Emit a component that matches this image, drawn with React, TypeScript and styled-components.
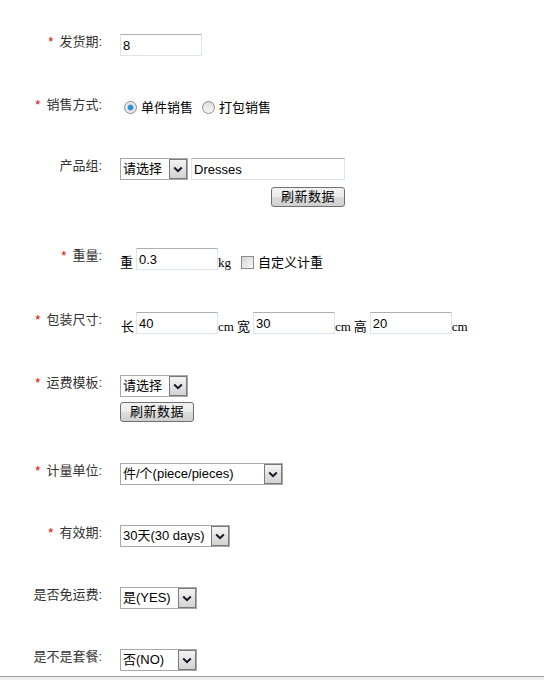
import React from "react";
import styled, { createGlobalStyle } from "styled-components";

const GlobalStyle = createGlobalStyle`
  html, body { margin: 0; padding: 0; background: #fff; }
  body { font-family: "Liberation Sans", "Noto Sans CJK SC", sans-serif; }
`;

const Page = styled.div`
  display: flex;
  flex-direction: column;
  height: 680px;
  overflow: hidden;
`;

const Form = styled.div`
  flex: 1;
  display: flex;
  flex-direction: column;
  padding-top: 34px;
  overflow: hidden;
`;

const Row = styled.div<{ $after: number }>`
  display: flex;
  align-items: flex-start;
  flex-shrink: 0;
  margin-bottom: ${(p) => p.$after}px;
`;

const Label = styled.div`
  width: 102px;
  margin-right: 18px;
  padding-top: 0;
  text-align: right;
  font-size: 13px;
  line-height: 15px;
  color: #333;
  white-space: nowrap;
`;

const Star = styled.span`
  color: #e00000;
  margin-right: 6px;
`;

const Field = styled.div<{ $w?: number }>`
  display: flex;
  flex-direction: column;
  align-items: flex-start;
  ${(p) => (p.$w ? `width: ${p.$w}px;` : "")}
`;

const Line = styled.div<{ $h?: number }>`
  display: flex;
  align-items: flex-end;
  ${(p) => (p.$h ? `height: ${p.$h}px; align-items: center;` : "")}
`;

const TextInput = styled.input<{ $w: number; $ml?: number }>`
  width: ${(p) => p.$w}px;
  height: 22px;
  box-sizing: border-box;
  margin: 0 0 0 ${(p) => p.$ml ?? 0}px;
  padding: 0 2px;
  border: 1px solid #dfe3ea;
  border-top-color: #abadb3;
  border-left-color: #e2e3ea;
  font: 13px "Liberation Sans", "Noto Sans CJK SC", sans-serif;
  color: #000;
  background: #fff;
  outline: none;
`;

const SelectBox = styled.div<{ $w: number }>`
  display: flex;
  width: ${(p) => p.$w}px;
  height: 22px;
  box-sizing: border-box;
  border: 1px solid #a8a8a8;
  background: #fff;
`;

const SelectValue = styled.span`
  flex: 1;
  padding-left: 2px;
  font-size: 13px;
  line-height: 20px;
  color: #000;
  white-space: nowrap;
  overflow: hidden;
`;

const SelectArrow = styled.span`
  width: 18px;
  box-sizing: border-box;
  border: 1px solid #7a7a7a;
  background: linear-gradient(#f4f4f4, #d2d2d2);
  display: flex;
  align-items: center;
  justify-content: center;
`;

const Button = styled.button<{ $mt: number; $self?: string }>`
  width: 74px;
  height: 20px;
  box-sizing: border-box;
  margin: ${(p) => p.$mt}px 0 0 0;
  align-self: ${(p) => p.$self ?? "flex-start"};
  padding: 0;
  border: 1px solid #707070;
  border-radius: 3px;
  background: linear-gradient(#f2f2f2 0%, #ebebeb 50%, #dddddd 50%, #cfcfcf 100%);
  font: 13px "Liberation Sans", "Noto Sans CJK SC", sans-serif;
  line-height: 18px;
  letter-spacing: 0.5px;
  color: #000;
`;

const Text = styled.span<{ $ml?: number; $mr?: number }>`
  font-size: 13px;
  line-height: 15px;
  color: #000;
  margin-left: ${(p) => p.$ml ?? 0}px;
  margin-right: ${(p) => p.$mr ?? 0}px;
  white-space: nowrap;
`;

const Unit = styled.span`
  font-family: "Liberation Serif", serif;
  font-size: 13px;
  line-height: 15px;
  color: #000;
`;

const RadioCircle = styled.span<{ $on?: boolean; $ml: number }>`
  width: 13px;
  height: 13px;
  box-sizing: border-box;
  margin-left: ${(p) => p.$ml}px;
  border-radius: 50%;
  border: 1px solid #8a8a8a;
  background: ${(p) =>
    p.$on
      ? "radial-gradient(circle, #1f8ad6 0, #2f97de 2.5px, #e4e4e4 3.3px, #f6f6f6 100%)"
      : "linear-gradient(#dcdcdc, #f7f7f7)"};
  flex-shrink: 0;
`;

const CheckBox = styled.span<{ $ml: number }>`
  width: 13px;
  height: 13px;
  box-sizing: border-box;
  margin: 0 0 1px ${(p) => p.$ml}px;
  border: 1px solid #8a8a8a;
  background: linear-gradient(135deg, #d4d4d4, #f8f8f8);
  flex-shrink: 0;
`;

const BottomStrip = styled.div`
  flex-shrink: 0;
  height: 4px;
  box-sizing: border-box;
  border-top: 1px solid #a0a0a0;
  background: #f0f0f0;
`;

const Chevron = () => (
  <svg width="10" height="7" viewBox="0 0 10 7">
    <path d="M1.2 1.5 L5 5.2 L8.8 1.5" fill="none" stroke="#111827" strokeWidth="2" />
  </svg>
);

const Select = ({ w, value }: { w: number; value: string }) => (
  <SelectBox $w={w}>
    <SelectValue>{value}</SelectValue>
    <SelectArrow>
      <Chevron />
    </SelectArrow>
  </SelectBox>
);

const FieldLabel = ({ req, children }: { req?: boolean; children: React.ReactNode }) => (
  <Label>
    {req && <Star>*</Star>}
    {children}
  </Label>
);

export default function App() {
  return (
    <Page>
      <GlobalStyle />
      <Form>
        <Row $after={41}>
          <FieldLabel req>发货期:</FieldLabel>
          <TextInput $w={82} defaultValue="8" />
        </Row>

        <Row $after={41}>
          <FieldLabel req>销售方式:</FieldLabel>
          <Line $h={20}>
            <RadioCircle $on $ml={4} />
            <Text $ml={4}>单件销售</Text>
            <RadioCircle $ml={9} />
            <Text $ml={4}>打包销售</Text>
          </Line>
        </Row>

        <Row $after={41}>
          <FieldLabel>产品组:</FieldLabel>
          <Field $w={225}>
            <Line>
              <Select w={68} value="请选择" />
              <TextInput $w={154} $ml={3} defaultValue="Dresses" />
            </Line>
            <Button $mt={7} $self="flex-end">刷新数据</Button>
          </Field>
        </Row>

        <Row $after={42}>
          <FieldLabel req>重量:</FieldLabel>
          <Line>
            <Text $mr={3}>重</Text>
            <TextInput $w={82} defaultValue="0.3" />
            <Unit>kg</Unit>
            <CheckBox $ml={10} />
            <Text $ml={4}>自定义计重</Text>
          </Line>
        </Row>

        <Row $after={41}>
          <FieldLabel req>包装尺寸:</FieldLabel>
          <Line>
            <Text $ml={1} $mr={2}>长</Text>
            <TextInput $w={82} defaultValue="40" />
            <Unit>cm</Unit>
            <Text $ml={3} $mr={3}>宽</Text>
            <TextInput $w={82} defaultValue="30" />
            <Unit>cm</Unit>
            <Text $ml={3} $mr={3}>高</Text>
            <TextInput $w={82} defaultValue="20" />
            <Unit>cm</Unit>
          </Line>
        </Row>

        <Row $after={41}>
          <FieldLabel req>运费模板:</FieldLabel>
          <Field>
            <Select w={68} value="请选择" />
            <Button $mt={5}>刷新数据</Button>
          </Field>
        </Row>

        <Row $after={40}>
          <FieldLabel req>计量单位:</FieldLabel>
          <Select w={163} value="件/个(piece/pieces)" />
        </Row>

        <Row $after={40}>
          <FieldLabel req>有效期:</FieldLabel>
          <Select w={110} value="30天(30 days)" />
        </Row>

        <Row $after={40}>
          <FieldLabel>是否免运费:</FieldLabel>
          <Select w={77} value="是(YES)" />
        </Row>

        <Row $after={0}>
          <FieldLabel>是不是套餐:</FieldLabel>
          <Select w={77} value="否(NO)" />
        </Row>
      </Form>
      <BottomStrip />
    </Page>
  );
}
